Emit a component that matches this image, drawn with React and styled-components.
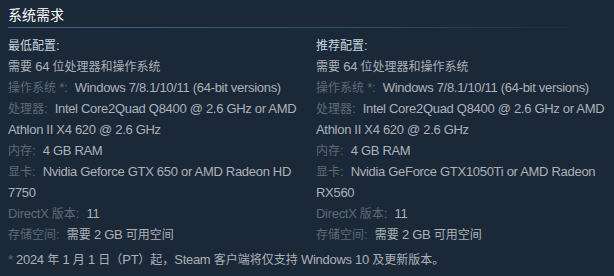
import React from 'react';
import styled, { createGlobalStyle } from 'styled-components';

const Global = createGlobalStyle`
  html, body {
    margin: 0;
    padding: 0;
    background: #1b2838;
  }
`;

const Page = styled.div`
  width: 614px;
  height: 276px;
  padding: 0 8px;
  box-sizing: border-box;
  background: #1b2838;
  overflow: hidden;
  font-family: "Liberation Sans", Arial, "Noto Sans CJK SC", sans-serif;
`;

const Title = styled.h2`
  margin: 0;
  padding: 4px 0 3px;
  line-height: 20px;
  font-size: 14px;
  font-weight: normal;
  color: #ffffff;
  font-family: "Noto Sans CJK SC", sans-serif;
`;

const Rule = styled.div`
  height: 1px;
  margin-right: -8px;
  background: linear-gradient(to right, #3d6c8d 0%, #2d5068 60%, rgba(45, 80, 104, 0) 98%);
`;

const Columns = styled.div`
  display: grid;
  grid-template-columns: 300px 300px;
  column-gap: 8px;
  margin-top: 7px;
`;

const List = styled.ul`
  list-style: none;
  margin: 0;
  padding: 0;
  font-family: "Liberation Sans", Arial, sans-serif;
  font-size: 13px;
  letter-spacing: -0.3px;
  line-height: 21px;
  color: #acb2b8;
`;

const Item = styled.li`
  margin: 0;
  height: auto;
  color: ${(p) => (p.$head ? '#c6d4df' : '#acb2b8')};
`;

const Label = styled.span`
  color: #5f6b75;
  margin-right: 4px;
`;

const Han = styled.span`
  font-family: "Noto Sans CJK SC", sans-serif;
  font-size: 12px;
  line-height: 1;
  letter-spacing: 0;
`;

const Note = styled.p`
  margin: 4px 0 0;
  font-family: "Liberation Sans", Arial, sans-serif;
  font-size: 13px;
  letter-spacing: -0.3px;
  line-height: 21px;
  color: #acb2b8;
`;

const Star = styled.span`
  color: #5f6b75;
`;

// CJK runs are set a little smaller than the Latin text, as in the Steam page
const Mixed = ({ text }) =>
  text
    .split(/([\u3000-\u9fff\uff00-\uffef]+)/)
    .filter(Boolean)
    .map((part, i) =>
      /[\u3000-\u9fff\uff00-\uffef]/.test(part) ? <Han key={i}>{part}</Han> : part
    );

const Spec = ({ label, value }) => (
  <Item>
    <Label>
      <Mixed text={label} />
    </Label>{' '}
    <Mixed text={value} />
  </Item>
);

const Column = ({ heading, cpu, gpu }) => (
  <List>
    <Item $head>
      <Mixed text={heading} />
    </Item>
    <Item>
      <Mixed text="需要 64 位处理器和操作系统" />
    </Item>
    <Spec label="操作系统 *:" value="Windows 7/8.1/10/11 (64-bit versions)" />
    <Spec label="处理器:" value={cpu} />
    <Spec label="内存:" value="4 GB RAM" />
    <Spec label="显卡:" value={gpu} />
    <Spec label="DirectX 版本:" value="11" />
    <Spec label="存储空间:" value="需要 2 GB 可用空间" />
  </List>
);

export default function App() {
  return (
    <Page>
      <Global />
      <Title>系统需求</Title>
      <Rule />
      <Columns>
        <Column
          heading="最低配置:"
          cpu="Intel Core2Quad Q8400 @ 2.6 GHz or AMD Athlon II X4 620 @ 2.6 GHz"
          gpu="Nvidia Geforce GTX 650 or AMD Radeon HD 7750"
        />
        <Column
          heading="推荐配置:"
          cpu="Intel Core2Quad Q8400 @ 2.6 GHz or AMD Athlon II X4 620 @ 2.6 GHz"
          gpu="Nvidia GeForce GTX1050Ti or AMD Radeon RX560"
        />
      </Columns>
      <Note>
        <Star>*</Star> <Mixed text="2024 年 1 月 1 日（PT）起，Steam 客户端将仅支持 Windows 10 及更新版本。" />
      </Note>
    </Page>
  );
}
